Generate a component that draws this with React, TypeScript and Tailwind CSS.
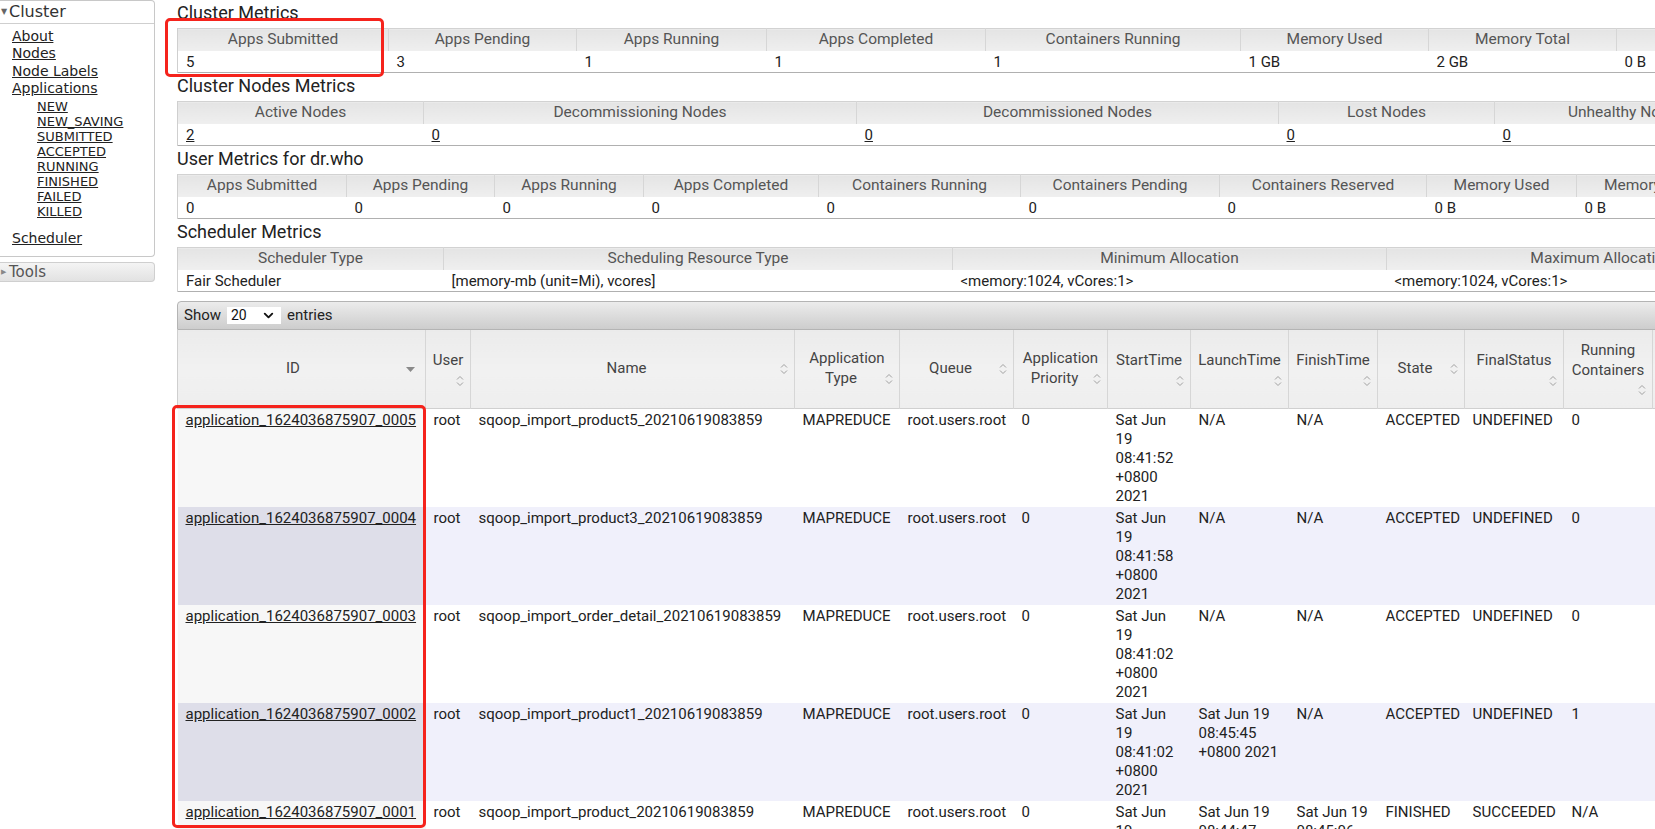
import { ChevronDown } from 'lucide-react';

type MetricCol = { label: string; width: number; value: string; link?: boolean };

const CLUSTER_METRICS: MetricCol[] = [
  { label: 'Apps Submitted', width: 211, value: '5' },
  { label: 'Apps Pending', width: 188, value: '3' },
  { label: 'Apps Running', width: 190, value: '1' },
  { label: 'Apps Completed', width: 219, value: '1' },
  { label: 'Containers Running', width: 255, value: '1' },
  { label: 'Memory Used', width: 188, value: '1 GB' },
  { label: 'Memory Total', width: 188, value: '2 GB' },
  { label: 'Memory Reserved', width: 260, value: '0 B' },
  { label: 'VCores Used', width: 160, value: '1' },
  { label: 'VCores Total', width: 160, value: '16' },
  { label: 'VCores Reserved', width: 160, value: '0' },
];

const NODE_METRICS: MetricCol[] = [
  { label: 'Active Nodes', width: 246, value: '2', link: true },
  { label: 'Decommissioning Nodes', width: 433, value: '0', link: true },
  { label: 'Decommissioned Nodes', width: 422, value: '0', link: true },
  { label: 'Lost Nodes', width: 216, value: '0', link: true },
  { label: 'Unhealthy Nodes', width: 264, value: '0', link: true },
  { label: 'Rebooted Nodes', width: 200, value: '0', link: true },
  { label: 'Shutdown Nodes', width: 200, value: '0', link: true },
];

const USER_METRICS: MetricCol[] = [
  { label: 'Apps Submitted', width: 169, value: '0' },
  { label: 'Apps Pending', width: 148, value: '0' },
  { label: 'Apps Running', width: 149, value: '0' },
  { label: 'Apps Completed', width: 175, value: '0' },
  { label: 'Containers Running', width: 202, value: '0' },
  { label: 'Containers Pending', width: 199, value: '0' },
  { label: 'Containers Reserved', width: 207, value: '0' },
  { label: 'Memory Used', width: 150, value: '0 B' },
  { label: 'Memory Pending', width: 172, value: '0 B' },
  { label: 'Memory Reserved', width: 172, value: '0 B' },
];

const SCHEDULER_METRICS: MetricCol[] = [
  { label: 'Scheduler Type', width: 266, value: 'Fair Scheduler' },
  { label: 'Scheduling Resource Type', width: 509, value: '[memory-mb (unit=Mi), vcores]' },
  { label: 'Minimum Allocation', width: 434, value: '<memory:1024, vCores:1>' },
  { label: 'Maximum Allocation', width: 430, value: '<memory:1024, vCores:1>' },
  { label: 'Maximum Cluster Application Priority', width: 320, value: '0' },
];

type AppCol = { key: string; label: string; width: number; sorted?: boolean; extraPad?: boolean };

const APP_COLS: AppCol[] = [
  { key: 'id', label: 'ID', width: 248, sorted: true },
  { key: 'user', label: 'User', width: 45 },
  { key: 'name', label: 'Name', width: 324 },
  { key: 'type', label: 'Application Type', width: 105 },
  { key: 'queue', label: 'Queue', width: 114 },
  { key: 'priority', label: 'Application Priority', width: 94 },
  { key: 'start', label: 'StartTime', width: 83, extraPad: true },
  { key: 'launch', label: 'LaunchTime', width: 98 },
  { key: 'finish', label: 'FinishTime', width: 89 },
  { key: 'state', label: 'State', width: 87 },
  { key: 'final', label: 'FinalStatus', width: 99 },
  { key: 'running', label: 'Running Containers', width: 89 },
  { key: 'cpu', label: 'Allocated CPU VCores', width: 90 },
  { key: 'mem', label: 'Allocated Memory MB', width: 90 },
  { key: 'progress', label: 'Progress', width: 90 },
];

type AppRow = Record<string, string>;

const APPS: AppRow[] = [
  { id: 'application_1624036875907_0005', name: 'sqoop_import_product5_20210619083859', start: 'Sat Jun 19 08:41:52 +0800 2021', launch: 'N/A', finish: 'N/A', state: 'ACCEPTED', final: 'UNDEFINED', running: '0' },
  { id: 'application_1624036875907_0004', name: 'sqoop_import_product3_20210619083859', start: 'Sat Jun 19 08:41:58 +0800 2021', launch: 'N/A', finish: 'N/A', state: 'ACCEPTED', final: 'UNDEFINED', running: '0' },
  { id: 'application_1624036875907_0003', name: 'sqoop_import_order_detail_20210619083859', start: 'Sat Jun 19 08:41:02 +0800 2021', launch: 'N/A', finish: 'N/A', state: 'ACCEPTED', final: 'UNDEFINED', running: '0' },
  { id: 'application_1624036875907_0002', name: 'sqoop_import_product1_20210619083859', start: 'Sat Jun 19 08:41:02 +0800 2021', launch: 'Sat Jun 19 08:45:45 +0800 2021', finish: 'N/A', state: 'ACCEPTED', final: 'UNDEFINED', running: '1' },
  { id: 'application_1624036875907_0001', name: 'sqoop_import_product_20210619083859', start: 'Sat Jun 19 08:40:55 +0800 2021', launch: 'Sat Jun 19 08:44:47 +0800 2021', finish: 'Sat Jun 19 08:45:06 +0800 2021', state: 'FINISHED', final: 'SUCCEEDED', running: 'N/A' },
];

function SortIcon() {
  return (
    <span className="float-right ml-[4px] mt-[4px]">
      <svg width="8" height="12" viewBox="0 0 8 12" className="block">
        <path d="M1 4.5 L4 1.5 L7 4.5 M1 7.5 L4 10.5 L7 7.5" stroke="#a0a0a0" strokeWidth="1" fill="none" />
      </svg>
    </span>
  );
}

function SortedIcon() {
  return (
    <span className="float-right ml-[4px] mt-[8px] mr-[4px]">
      <svg width="9" height="5" viewBox="0 0 9 5" className="block">
        <path d="M0 0 L9 0 L4.5 5 Z" fill="#8a8a8a" />
      </svg>
    </span>
  );
}

function MetricsTable({ cols }: { cols: MetricCol[] }) {
  const total = cols.reduce((s, c) => s + c.width, 0);
  return (
    <table className="table-fixed border-collapse text-[15px]" style={{ width: total }}>
      <colgroup>
        {cols.map(c => (
          <col key={c.label} style={{ width: c.width }} />
        ))}
      </colgroup>
      <thead>
        <tr className="h-[22px] border-t border-[#d2d2d2]">
          {cols.map((c, i) => (
            <th
              key={c.label}
              className={`bg-gradient-to-b from-[#e4e4e4] to-[#efefef] text-[#555] text-[15.5px] font-normal text-center leading-[21px] whitespace-nowrap overflow-hidden border-r border-[#d6d6d6] ${i === 0 ? 'border-l border-l-[#cfcfcf]' : ''}`}
            >
              {c.label}
            </th>
          ))}
        </tr>
      </thead>
      <tbody>
        <tr className="h-[22px] border-b border-[#b0b0b0]">
          {cols.map((c, i) => (
            <td
              key={c.label}
              className={`pl-2 pt-[1px] text-[#222] leading-[20px] whitespace-nowrap overflow-hidden ${i === 0 ? 'border-l border-[#cfcfcf]' : ''}`}
            >
              {c.link ? <a className="underline">{c.value}</a> : c.value}
            </td>
          ))}
        </tr>
      </tbody>
    </table>
  );
}

function Title({ children }: { children: string }) {
  return <div className="h-[28px] leading-[25px] text-[18px] text-[#222]">{children}</div>;
}

function Sidebar() {
  const states = ['NEW', 'NEW_SAVING', 'SUBMITTED', 'ACCEPTED', 'RUNNING', 'FINISHED', 'FAILED', 'KILLED'];
  return (
    <aside className="w-[155px] shrink-0 font-['DejaVu_Sans',Verdana,sans-serif] text-[#222]">
      <div className="h-[257px] border border-l-0 border-[#c8c8c8] rounded-r-[4px] bg-white">
        <div className="h-[23px] border-b border-[#cfcfcf] flex items-center text-[16px] text-[#333]">
          <span className="text-[8px] text-[#666] w-[9px] pl-[1px]">▼</span>
          <span>Cluster</span>
        </div>
        <div className="pt-[4px] pl-[12px] text-[14px] leading-[17.3px]">
          <div><a className="underline">About</a></div>
          <div><a className="underline">Nodes</a></div>
          <div><a className="underline">Node Labels</a></div>
          <div><a className="underline">Applications</a></div>
          <div className="mt-[3px] pl-[25px] text-[13px] leading-[14.9px]">
            {states.map(s => (
              <div key={s}><a className="underline">{s}</a></div>
            ))}
          </div>
          <div className="mt-[11px]"><a className="underline">Scheduler</a></div>
        </div>
      </div>
      <div className="mt-[5px] h-[20px] border border-l-0 border-[#cfcfcf] rounded-r-[4px] bg-gradient-to-b from-[#f4f4f4] to-[#e2e2e2] flex items-center text-[15px] text-[#555]">
        <span className="text-[7px] text-[#888] w-[9px] pl-[1px]">▶</span>
        <span>Tools</span>
      </div>
    </aside>
  );
}

function AppsTable() {
  const total = APP_COLS.reduce((s, c) => s + c.width, 0);
  return (
    <div style={{ width: total }}>
      <div className="h-[29px] border border-[#b4b4b4] rounded-tl-[4px] bg-gradient-to-b from-[#ececec] to-[#cdcdcd] flex items-center pl-[6px] text-[15px] text-[#222]">
        <span>Show</span>
        <span className="ml-[6px] mr-[6px] w-[54px] h-[17px] bg-white flex items-center pl-[4px] text-[#111]">
          <span className="text-[14px]">20</span>
          <ChevronDown size={15} strokeWidth={3} className="ml-auto mr-[5px]" />
        </span>
        <span>entries</span>
      </div>
      <table className="table-fixed border-collapse text-[15px]" style={{ width: total }}>
        <colgroup>
          {APP_COLS.map(c => (
            <col key={c.key} style={{ width: c.width }} />
          ))}
        </colgroup>
        <thead>
          <tr className="h-[78px] border-b border-[#d0d0d0]">
            {APP_COLS.map((c, i) => (
              <th
                key={c.key}
                className={`bg-gradient-to-b from-[#ebebeb] via-[#f1f1f1] to-[#eeeeee] text-[#444] font-normal text-center align-middle px-[6px] leading-[19.5px] border-r border-[#d6d6d6] ${i === 0 ? 'border-l border-l-[#cfcfcf]' : ''}`}
              >
                {c.label}
                {c.sorted ? <SortedIcon /> : <SortIcon />}
              </th>
            ))}
          </tr>
        </thead>
        <tbody>
          {APPS.map((r, ri) => {
            const even = ri % 2 === 1;
            return (
              <tr key={r.id} className={even ? 'bg-[#f0f0fb]' : 'bg-white'}>
                {APP_COLS.map(c => {
                  let v = r[c.key];
                  if (c.key === 'user') v = 'root';
                  if (c.key === 'type') v = 'MAPREDUCE';
                  if (c.key === 'queue') v = 'root.users.root';
                  if (c.key === 'priority') v = '0';
                  if (v === undefined) v = c.key === 'progress' ? '' : '-1';
                  const idBg = c.key === 'id' ? (even ? 'bg-[#dedee9]' : 'bg-[#f7f7f7]') : '';
                  return (
                    <td
                      key={c.key}
                      className={`align-top pl-2 ${c.extraPad ? 'pr-[12px]' : 'pr-[8px]'} pt-[2px] pb-[1px] leading-[19px] text-[#222] ${idBg}`}
                    >
                      {c.key === 'id' ? <a className="underline">{v}</a> : v}
                    </td>
                  );
                })}
              </tr>
            );
          })}
        </tbody>
      </table>
    </div>
  );
}

export default function App() {
  return (
    <div className="relative w-[1655px] h-[829px] overflow-hidden bg-white flex">
      <Sidebar />
      <main className="ml-[22px] font-[Roboto,sans-serif]">
        <Title>Cluster Metrics</Title>
        <MetricsTable cols={CLUSTER_METRICS} />
        <Title>Cluster Nodes Metrics</Title>
        <MetricsTable cols={NODE_METRICS} />
        <Title>User Metrics for dr.who</Title>
        <MetricsTable cols={USER_METRICS} />
        <Title>Scheduler Metrics</Title>
        <MetricsTable cols={SCHEDULER_METRICS} />
        <div className="mt-[9px]">
          <AppsTable />
        </div>
      </main>

      {/* annotation boxes */}
      <div className="absolute left-[165px] top-[18px] w-[219px] h-[59px] border-[3.5px] border-[#f5231c] rounded-[5px] pointer-events-none" />
      <div className="absolute left-[172px] top-[405px] w-[254px] h-[423px] border-[3.5px] border-[#f5231c] rounded-[5px] pointer-events-none" />
    </div>
  );
}
